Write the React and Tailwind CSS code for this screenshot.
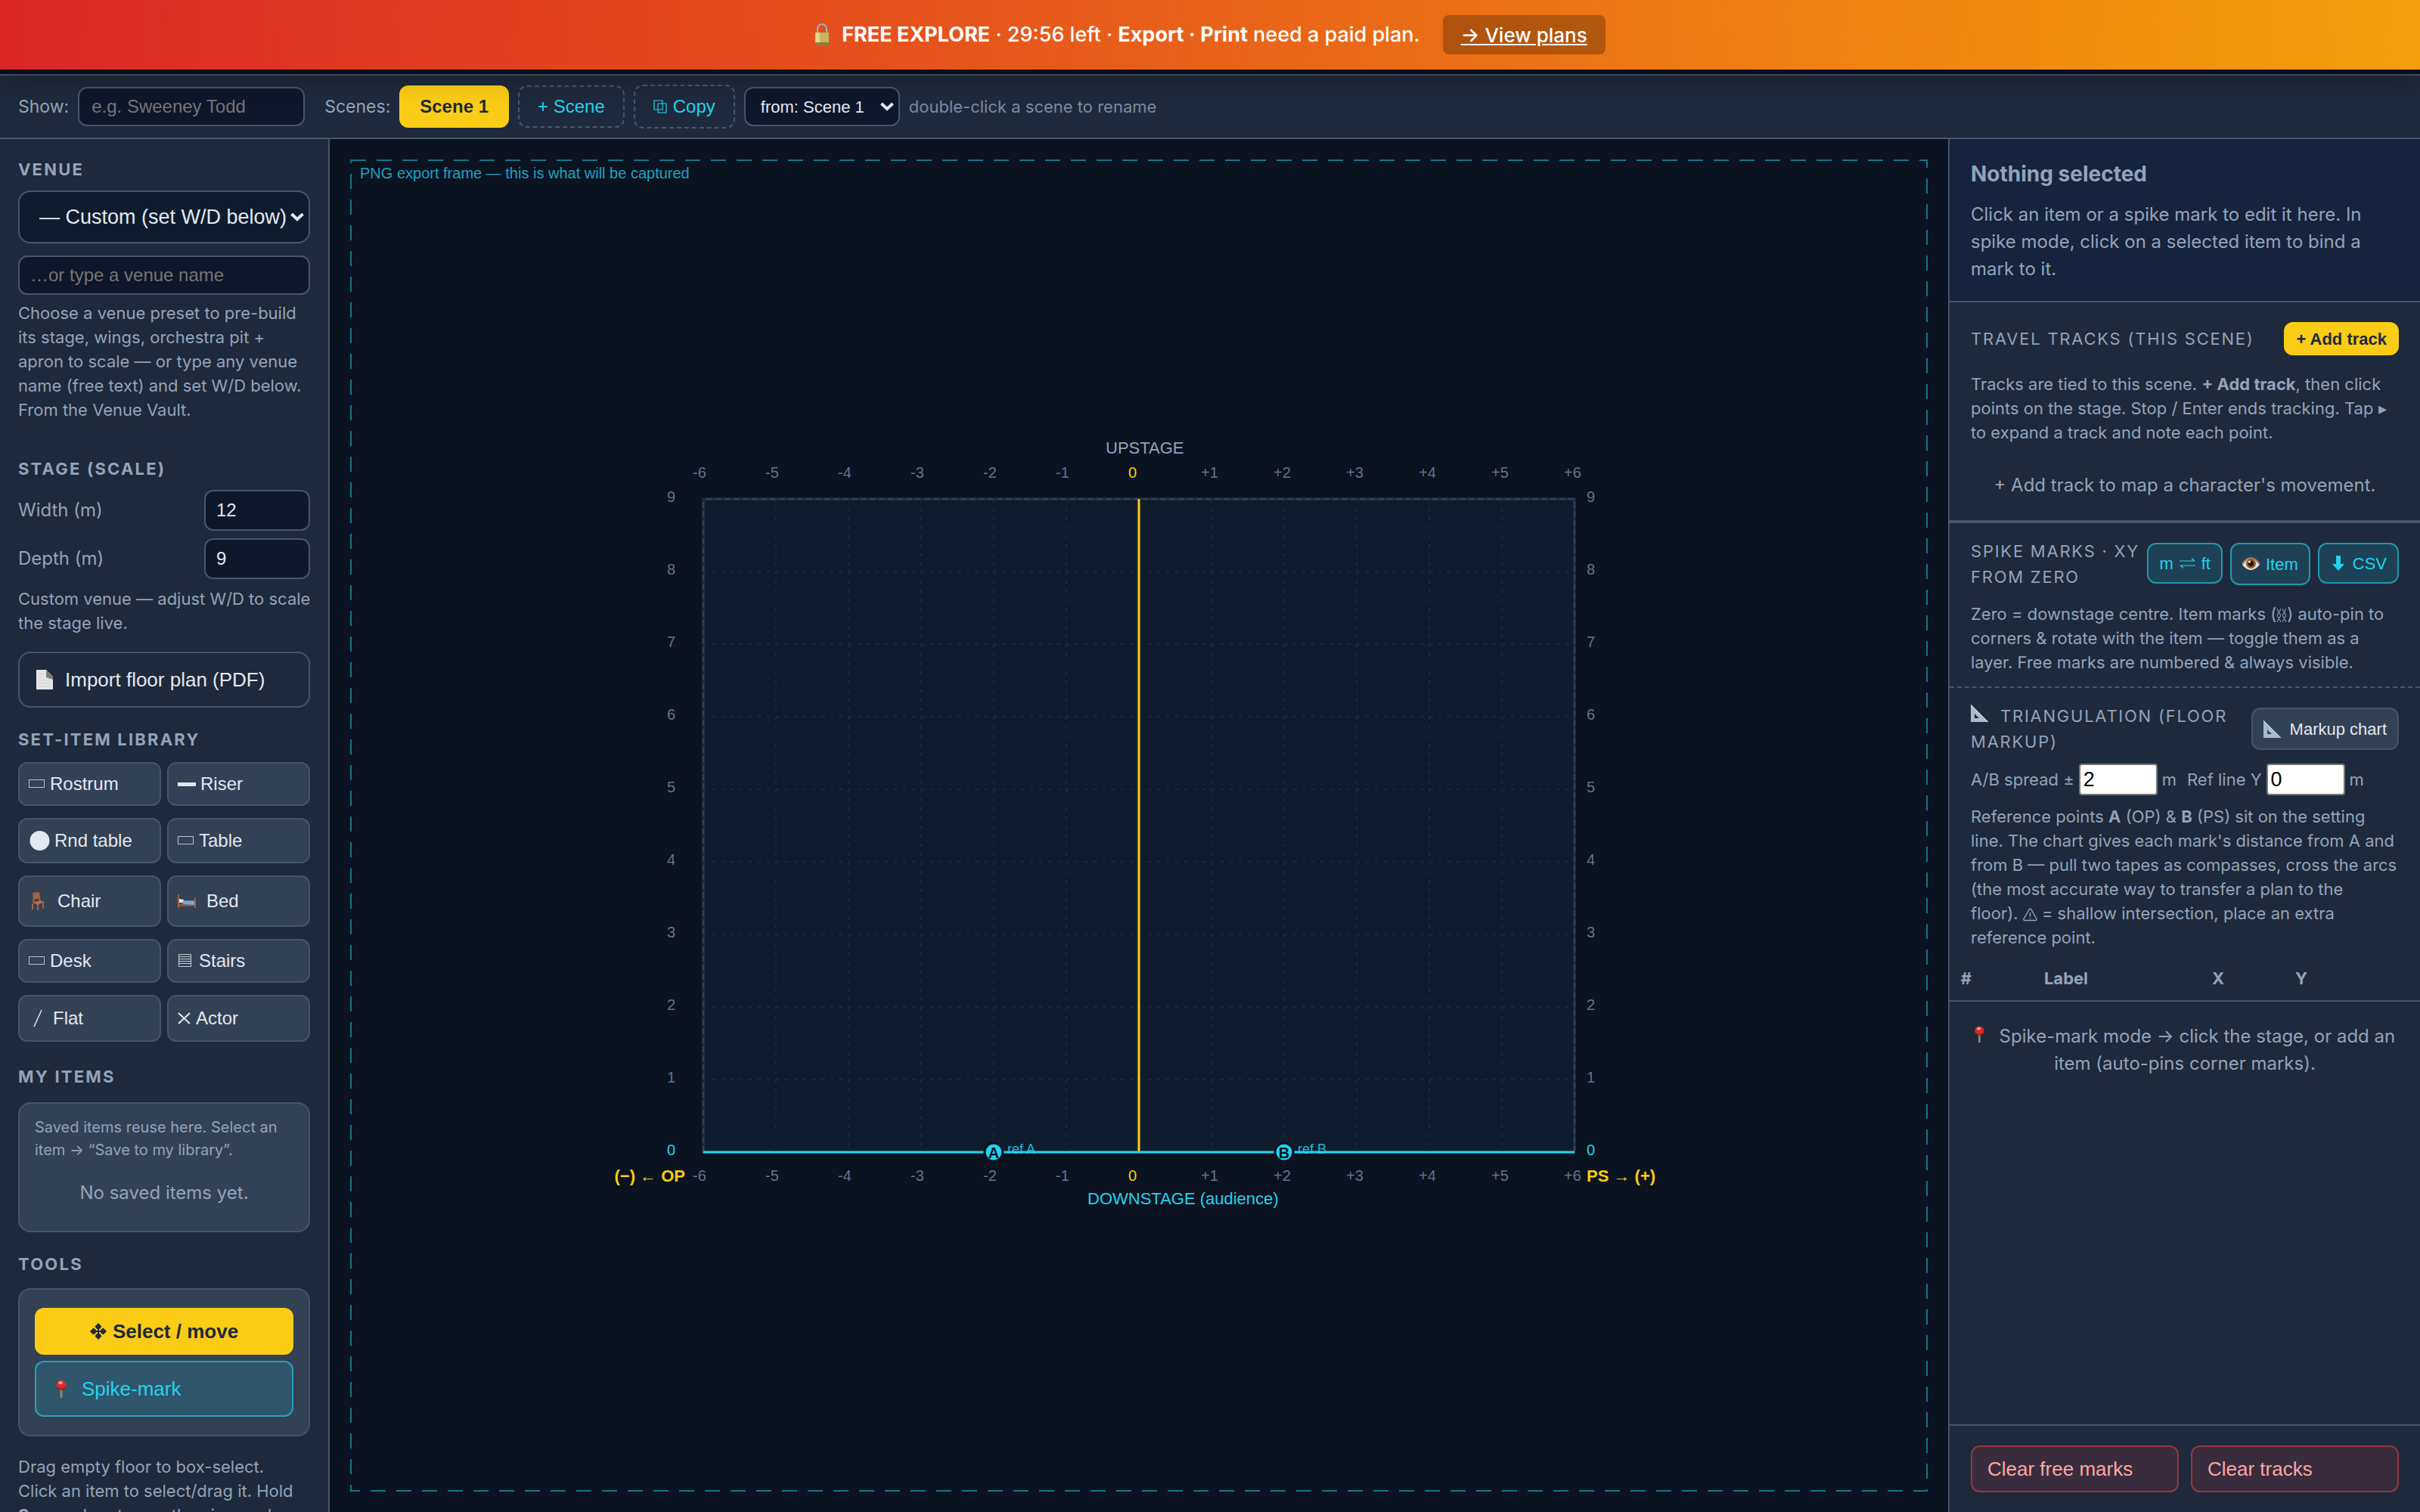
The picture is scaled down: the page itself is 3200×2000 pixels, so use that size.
import React from 'react';

const LockIcon = () => (
  <svg width="20" height="34" viewBox="0 0 20 34" aria-hidden="true">
    <path d="M4 17V9a6 6 0 0 1 12 0v8" fill="none" stroke="#9fb0bb" strokeWidth="2" />
    <rect x="1" y="14" width="18" height="17" rx="1" fill="#c8b460" />
    <rect x="1" y="14" width="6" height="17" rx="1" fill="#e3d68c" />
    <path d="M1 27h18v4H1z" fill="#8f7b34" />
  </svg>
);

const PageIcon = () => (
  <svg width="22" height="26" viewBox="0 0 22 26" aria-hidden="true">
    <path d="M0 0h13l9 9v17H0z" fill="#e6e6e6" />
    <path d="M13 0l9 9v4l-9-3z" fill="#7d7d7d" />
    <path d="M3 6h7M3 10h7M3 14h16M3 18h16M3 22h16" stroke="#d0d0d0" strokeWidth="1" />
  </svg>
);

const PinIcon = ({ size = 24 }) => (
  <svg width={(size * 14) / 24} height={size} viewBox="0 0 14 24" aria-hidden="true">
    <path d="M7 12v12" stroke="#8d8580" strokeWidth="3" />
    <circle cx="7" cy="7" r="6.500" fill="#d92b2b" />
    <path d="M2 10a6 6 0 0 0 10 0" fill="none" stroke="#a31919" strokeWidth="2" />
    <ellipse cx="6" cy="4" rx="3" ry="2" fill="#ff8f85" />
  </svg>
);

const RulerIcon = () => (
  <svg width="23" height="23" viewBox="0 0 23 23" aria-hidden="true">
    <path d="M0 0l23 23H0zM5 12v6h6z" fill="#a9bccb" fillRule="evenodd" />
    <path d="M0 0l23 23" stroke="#dce7ef" strokeWidth="1" />
  </svg>
);

const EyeIcon = () => (
  <svg width="23" height="18" viewBox="0 0 23 18" aria-hidden="true">
    <path d="M0 10Q11 -6 23 10Q11 24 0 10z" fill="#eadfd8" />
    <path d="M0 9Q11 -7 23 9" fill="none" stroke="#a5786a" strokeWidth="2" />
    <circle cx="11.500" cy="8.500" r="6.500" fill="#8a5a22" />
    <circle cx="11.500" cy="8.500" r="3.500" fill="#1b120b" />
    <circle cx="9.500" cy="6" r="1.500" fill="#fff" />
  </svg>
);

const CopyIcon = () => (
  <svg width="18" height="18" viewBox="0 0 18 18" fill="none" stroke="currentColor" strokeWidth="1.200" aria-hidden="true">
    <path d="M1 1h11v12H1zM6 5h11v12H6z" />
  </svg>
);

const SwapIcon = () => (
  <svg width="21" height="14" viewBox="0 0 21 14" fill="none" stroke="currentColor" strokeWidth="1.200" aria-hidden="true">
    <path d="M0 4h20M16 0.500l4 3.500M21 10H1M5 13.500l-4-3.500" />
  </svg>
);

const DownIcon = () => (
  <svg width="22" height="20" viewBox="-3 0 22 20" fill="currentColor" aria-hidden="true">
    <path d="M5 0h6v11h5l-8 9-8-9h5z" />
  </svg>
);

const MoveIcon = () => (
  <svg width="22" height="22" viewBox="0 0 20 20" fill="currentColor" aria-hidden="true">
    <path d="M10 0l4 4-2 3h-1v2h2V8l3-2 4 4-4 4-3-2v-1h-2v2h1l2 3-4 4-4-4 2-3h1v-2H7v1l-3 2-4-4 4-4 3 2v1h2V7H8L6 4z" />
  </svg>
);

const ChainIcon = () => (
  <svg className="inline-block" width="14" height="18" viewBox="0 0 14 18" fill="none" stroke="currentColor" aria-hidden="true">
    <path d="M1.500 0q0 4 2 4t2-4M8.500 0q0 4 2 4t2-4M1.500 18q0-4 2-4t2 4M8.500 18q0-4 2-4t2 4M3.500 3v4M10.500 3v4M3.500 11v4M10.500 11v4" />
    <ellipse cx="3.500" cy="9" rx="2" ry="3" />
    <ellipse cx="10.500" cy="9" rx="2" ry="3" />
  </svg>
);

const WarnIcon = () => (
  <svg className="inline-block" width="19" height="18" viewBox="0 0 19 18" fill="none" stroke="currentColor" strokeWidth="1.400" aria-hidden="true">
    <path d="M8.500 1.500q1-1.200 2 0l7.500 13q.5 2-1.500 2h-14q-2 0-1.500-2zM9.500 6v5.500M9.500 13v1.500" />
  </svg>
);

const Chevron = () => (
  <svg
    className="pointer-events-none absolute top-1/2 right-2 -translate-y-1/2"
    width="18"
    height="12"
    viewBox="0 0 18 12"
    fill="none"
    stroke="#e2e8f0"
    strokeWidth="4"
    aria-hidden="true"
  >
    <path d="M1.500 2L9 9l7.500-7" />
  </svg>
);

// icons of the set-item library
const glyphs = {
  box: (
    <svg width="22" height="12" viewBox="0 0 22 12" fill="none" stroke="#b4bfcc">
      <rect x="0.500" y="0.500" width="20" height="10" />
    </svg>
  ),
  bar: (
    <svg width="24" height="5" viewBox="0 0 24 5">
      <rect width="24" height="5" fill="#e2e8f0" />
    </svg>
  ),
  round: (
    <svg width="28" height="26" viewBox="0 0 28 26">
      <circle cx="14.500" cy="13" r="13" fill="#e2e8f0" />
    </svg>
  ),
  chair: (
    <svg width="22" height="24" viewBox="0 0 22 24" fill="none" stroke="#a9603d" strokeWidth="2">
      <path d="M5 1l9-1 1 8-9 2z" fill="#a9603d" stroke="none" />
      <path d="M6 9l1 5M14 8l1 4M5 15v8M12 16v8M19 13v9" />
      <path d="M5 14l10-3 6 2-9 4z" fill="#b56c45" stroke="none" />
    </svg>
  ),
  bed: (
    <svg width="24" height="19" viewBox="0 0 24 19">
      <path d="M7 9l14-1v7H7z" fill="#6f9cc4" />
      <path d="M2 6l6 1v4H2z" fill="#dbe6f1" />
      <path d="M2 12h20v4H2z" fill="#8a5135" />
      <path d="M7 8l15 1v5L7 13z" fill="#7ba7cf" />
      <path d="M0 0h2v18H0zM22 5h2v13h-2z" fill="#a9603d" />
    </svg>
  ),
  stairs: (
    <svg width="19" height="18" viewBox="0 0 19 18" fill="none" stroke="#c3ccd7">
      <path d="M1.500 0.500h16v16h-16zM1 3.500h17M1 6.500h17M1 9.500h17M1 12.500h17" />
    </svg>
  ),
  flat: (
    <svg width="20" height="24" viewBox="0 0 20 24" fill="none" stroke="#e2e8f0" strokeWidth="1.500">
      <path d="M7 23L17 1" />
    </svg>
  ),
  cross: (
    <svg width="17" height="16" viewBox="0 0 17 16" fill="none" stroke="#e2e8f0" strokeWidth="2">
      <path d="M1 1l15 14M16 1L1 15" />
    </svg>
  ),
};

const setItems = [
  { label: 'Rostrum', icon: 'box', size: 'h-[58px]', slot: 'w-7' },
  { label: 'Riser', icon: 'bar', size: 'h-[58px]', slot: 'w-[30px]' },
  { label: 'Rnd table', icon: 'round', size: 'h-15', slot: 'w-[34px]' },
  { label: 'Table', icon: 'box', size: 'h-15', slot: 'w-7' },
  { label: 'Chair', icon: 'chair', size: 'h-17', slot: 'w-[38px]' },
  { label: 'Bed', icon: 'bed', size: 'h-17', slot: 'w-[38px]' },
  { label: 'Desk', icon: 'box', size: 'h-[58px]', slot: 'w-7' },
  { label: 'Stairs', icon: 'stairs', size: 'h-[58px]', slot: 'w-7' },
  { label: 'Flat', icon: 'flat', size: 'h-[62px]', slot: 'w-8' },
  { label: 'Actor', icon: 'cross', size: 'h-[62px]', slot: 'w-6' },
];

const Heading = ({ children, className = '' }) => (
  <h2 className={`text-[22px] leading-8 font-bold tracking-widest text-[#94a3b8] uppercase ${className}`}>{children}</h2>
);

const Hint = ({ children, className = '' }) => <p className={`text-[22px] leading-8 text-[#94a3b8] ${className}`}>{children}</p>;

const TrialBanner = () => (
  <div className="relative z-10 flex h-23 shrink-0 items-center justify-center bg-linear-to-r/srgb from-[#dc2626] to-[#f59e0b] text-[27px] font-medium text-white shadow-[0_4px_40px_rgba(0,0,0,0.35)]">
    <LockIcon />
    <span className="ml-4">
      <b>FREE EXPLORE</b> · 29:56 left · <b>Export · Print</b> need a paid plan.
    </span>
    <a href="#plans" className="ml-7.5 flex h-13 items-center rounded-lg bg-black/25 px-6 text-[26px] font-medium underline">
      → View plans
    </a>
  </div>
);

const SceneBar = () => (
  <header className="mt-1.5 flex shrink-0 items-center gap-3 border-y-2 border-[#475569] bg-[#1e293b] px-6 py-3 text-[24px] text-[#94a3b8]">
    <label htmlFor="show" className="text-[23px]">
      Show:
    </label>
    <input
      id="show"
      placeholder="e.g. Sweeney Todd"
      className="h-[52px] w-75 rounded-xl border-2 border-[#475569] bg-[#0f172a] px-4 font-[Liberation_Sans,sans-serif] text-[#e2e8f0] placeholder:text-[#757575]"
    />
    <span className="ml-3.5 text-[23px]">Scenes:</span>
    <button className="h-14 rounded-xl bg-[#facc15] px-[27px] font-[Liberation_Sans,sans-serif] font-bold text-[#1e293b]">Scene 1</button>
    <button className="h-14 rounded-xl border-2 border-dashed border-[#475569] px-6 font-[Liberation_Sans,sans-serif] text-[#22d3ee]">+ Scene</button>
    <button className="flex h-[58px] items-center gap-2 rounded-xl border-2 border-dashed border-[#475569] px-6 font-[Liberation_Sans,sans-serif] text-[#22d3ee]">
      <CopyIcon />
      Copy
    </button>
    <div className="relative">
      <select
        aria-label="Copy from scene"
        className="h-[52px] w-[206px] appearance-none rounded-xl border-2 border-[#475569] bg-[#0f172a] pl-5 font-[Liberation_Sans,sans-serif] text-[22px] text-[#e2e8f0]"
      >
        <option>from: Scene 1</option>
      </select>
      <Chevron />
    </div>
    <span className="text-[22px] opacity-80">double-click a scene to rename</span>
  </header>
);

const StageField = ({ id, label, value }) => (
  <div className="flex items-center justify-between">
    <label htmlFor={id} className="text-[24px] text-[#94a3b8]">
      {label}
    </label>
    <input
      id={id}
      defaultValue={value}
      className="h-[54px] w-35 rounded-xl border-2 border-[#475569] bg-[#0f172a] px-3.5 font-[Liberation_Sans,sans-serif] text-[24px] text-[#e2e8f0]"
    />
  </div>
);

const LeftPanel = () => (
  <aside className="w-109 shrink-0 overflow-hidden border-r-2 border-[#475569] bg-[#1e293b] px-6 pt-6">
    <Heading>Venue</Heading>
    <div className="relative mt-3">
      <select
        aria-label="Venue preset"
        className="h-[70px] w-full appearance-none rounded-2xl border-2 border-[#475569] bg-[#0f1c2e] pl-[26px] font-[Liberation_Sans,sans-serif] text-[27px] text-[#e2e8f0]"
      >
        <option>— Custom (set W/D below)</option>
      </select>
      <Chevron />
    </div>
    <input
      aria-label="Venue name"
      placeholder="…or type a venue name"
      className="mt-4 h-[52px] w-full rounded-xl border-2 border-[#475569] bg-[#0f172a] px-3.5 font-[Liberation_Sans,sans-serif] text-[24px] text-[#e2e8f0] placeholder:text-[#757575]"
    />
    <Hint className="mt-2">
      Choose a venue preset to pre-build its stage, wings, orchestra pit + apron to scale — or type any venue name (free text) and set W/D below. From the
      Venue Vault.
    </Hint>

    <Heading className="mt-11.5">Stage (scale)</Heading>
    <div className="mt-3 flex flex-col gap-2.5">
      <StageField id="width" label="Width (m)" value="12" />
      <StageField id="depth" label="Depth (m)" value="9" />
    </div>
    <Hint className="mt-2.5 whitespace-nowrap">
      Custom venue — adjust W/D to scale
      <br />
      the stage live.
    </Hint>
    <button className="mt-5.5 flex h-[74px] w-full items-center gap-4 rounded-2xl border-2 border-[#475569] px-[22px] font-[Liberation_Sans,sans-serif] text-[26px] text-[#e2e8f0]">
      <PageIcon />
      Import floor plan (PDF)
    </button>

    <Heading className="mt-6.5">Set-item library</Heading>
    <div className="mt-3.5 grid grid-cols-2 gap-x-2 gap-y-4">
      {setItems.map((item) => (
        <button
          key={item.label}
          className={`flex items-center rounded-xl border-2 border-[#475569] bg-[#334155] px-3 font-[Liberation_Sans,sans-serif] text-[24px] text-[#e2e8f0] ${item.size}`}
        >
          <span className={`shrink-0 text-left ${item.slot}`}>{glyphs[item.icon]}</span>
          {item.label}
        </button>
      ))}
    </div>

    <Heading className="mt-7.5">My items</Heading>
    <div className="mt-4.5 h-43 rounded-2xl border-2 border-[#475569] bg-[#334155] px-5 pt-4 text-[#94a3b8]">
      <p className="text-[20px] leading-[30px]">Saved items reuse here. Select an item → “Save to my library”.</p>
      <p className="mt-6 text-center text-[24px] leading-9">No saved items yet.</p>
    </div>

    <Heading className="mt-6.5">Tools</Heading>
    <div className="mt-4 flex flex-col gap-2 rounded-2xl border-2 border-[#475569] bg-[#334155] px-5 py-6 font-[Liberation_Sans,sans-serif] text-[26px]">
      <button className="flex h-[62px] items-center justify-center gap-2 rounded-xl bg-[#facc15] font-bold text-[#1e293b]">
        <MoveIcon />
        Select / move
      </button>
      <button className="flex h-[74px] items-center gap-5 rounded-xl border-2 border-[#22d3ee]/60 bg-[#22d3ee]/15 px-[26px] text-[#22d3ee]">
        <PinIcon />
        Spike-mark
      </button>
    </div>
    <Hint className="mt-6">
      Drag empty floor to box-select.
      <br />
      Click an item to select/drag it. Hold <b>Space</b>-drag to pan the view and wheel to zoom.
    </Hint>
  </aside>
);

// stage geometry in drawing units, 96 per metre
const UNIT = 96;
const LEFT = 494;
const RIGHT = 1646;
const TOP = 476;
const BOTTOM = 1340;
const CENTRE = 1070;
const columns = Array.from({ length: 13 }, (_, i) => i - 6);
const rows = Array.from({ length: 10 }, (_, i) => i);

const RefPoint = ({ x, name }) => (
  <g>
    <circle cx={x} cy={BOTTOM} r="12" fill="#22d3ee" stroke="#0b1220" strokeWidth="3" />
    <text x={x} y={BOTTOM + 8} textAnchor="middle" fontSize="20" fontWeight="700" fill="#0b1220">
      {name}
    </text>
    <text x={x + 18} y={BOTTOM + 2} fontSize="18" fill="#22d3ee" opacity="0.85">
      ref {name}
    </text>
  </g>
);

const StagePlan = () => (
  <main className="min-w-0 flex-1 bg-[#0b1220]">
    <svg className="block h-full w-full" viewBox="0 0 2140 1816" fontFamily="Liberation Sans, sans-serif" fontSize="20">
      <rect x="28" y="28" width="2084" height="1760" fill="none" stroke="#22d3ee" strokeOpacity="0.5" strokeWidth="2" strokeDasharray="20 14" />
      <text x="40" y="52" fill="#22d3ee" opacity="0.75">
        PNG export frame — this is what will be captured
      </text>

      <rect x={LEFT} y={TOP} width={RIGHT - LEFT} height={BOTTOM - TOP} fill="#0f1c2e" stroke="#334155" strokeWidth="3" />
      <g stroke="#1e293b" strokeWidth="2" strokeDasharray="4 8">
        {columns.map((m) => (
          <line key={m} x1={CENTRE + m * UNIT} y1={TOP} x2={CENTRE + m * UNIT} y2={BOTTOM} />
        ))}
        {rows.map((m) => (
          <line key={m} x1={LEFT} y1={BOTTOM - m * UNIT} x2={RIGHT} y2={BOTTOM - m * UNIT} />
        ))}
      </g>
      <line x1={CENTRE} y1={TOP} x2={CENTRE} y2={BOTTOM} stroke="#facc15" strokeWidth="3" />
      <line x1={LEFT} y1={BOTTOM} x2={RIGHT} y2={BOTTOM} stroke="#22d3ee" strokeWidth="3" />

      {columns.map((m) => (
        <g key={m} fill={m === 0 ? '#facc15' : '#64748b'}>
          <text x={CENTRE + m * UNIT - 14} y={TOP - 28}>
            {m > 0 ? `+${m}` : m}
          </text>
          <text x={CENTRE + m * UNIT - 14} y={BOTTOM + 38}>
            {m > 0 ? `+${m}` : m}
          </text>
        </g>
      ))}
      {rows.map((m) => (
        <g key={m} fill={m === 0 ? '#22d3ee' : '#64748b'}>
          <text x={LEFT - 48} y={BOTTOM - m * UNIT + 4}>
            {m}
          </text>
          <text x={RIGHT + 16} y={BOTTOM - m * UNIT + 4}>
            {m}
          </text>
        </g>
      ))}

      <g fontSize="22">
        <text x={CENTRE - 44} y={TOP - 60} fill="#94a3b8">
          UPSTAGE
        </text>
        <text x={CENTRE - 68} y={BOTTOM + 69} fill="#22d3ee">
          DOWNSTAGE (audience)
        </text>
        <text x={LEFT - 24} y={BOTTOM + 39} textAnchor="end" fontWeight="700" fill="#facc15">
          (−) ← OP
        </text>
        <text x={RIGHT + 16} y={BOTTOM + 39} fontWeight="700" fill="#facc15">
          PS → (+)
        </text>
      </g>
      <RefPoint x={CENTRE - 2 * UNIT} name="A" />
      <RefPoint x={CENTRE + 2 * UNIT} name="B" />
    </svg>
  </main>
);

const PanelTitle = ({ children }) => (
  <h2 className="text-[22px] leading-[34px] font-normal tracking-[0.08em] text-[#94a3b8] uppercase">{children}</h2>
);

const cyanButton =
  'flex shrink-0 items-center gap-2 rounded-xl border-2 border-[#22d3ee]/60 bg-[#22d3ee]/15 px-3.5 font-[Liberation_Sans,sans-serif] text-[22px] text-[#22d3ee]';
const dangerButton =
  'h-[62px] flex-1 rounded-xl border-2 border-[#ef4444]/50 bg-[#ef4444]/13 px-5 text-left font-[Liberation_Sans,sans-serif] text-[26px] text-[#fca5a5]';
const smallInput =
  'h-[42px] w-26 rounded-sm border-2 border-[#767676] bg-white px-1 font-[Liberation_Sans,sans-serif] text-[27px] text-black';

const RightPanel = () => (
  <aside className="flex w-156 shrink-0 flex-col border-l-2 border-[#475569] bg-[#1e293b] text-[#94a3b8]">
    <section className="border-b-2 border-[#475569] bg-[#17233c] px-7 pt-6 pb-6">
      <h2 className="text-[28px] leading-11 font-bold">Nothing selected</h2>
      <p className="mt-3.5 text-[24px] leading-9">
        Click an item or a spike mark to edit it here. In spike mode, click on a selected item to bind a mark to it.
      </p>
    </section>

    <section className="border-b-4 border-[#475569] px-7 pt-6.5 pb-7">
      <div className="flex items-center justify-between">
        <PanelTitle>Travel tracks (this scene)</PanelTitle>
        <button className="h-11 rounded-xl bg-[#facc15] px-4 font-[Liberation_Sans,sans-serif] text-[22px] font-bold text-[#1e293b]">+ Add track</button>
      </div>
      <Hint className="mt-5.5">
        Tracks are tied to this scene. <b>+ Add track</b>, then click points on the stage. Stop / Enter ends tracking. Tap ▸ to expand a track and note each
        point.
      </Hint>
      <p className="mt-9 text-center text-[24px] leading-9">+ Add track to map a character's movement.</p>
    </section>

    <section className="border-b-2 border-dashed border-[#475569] px-7 pt-5 pb-4">
      <div className="flex items-start justify-between">
        <PanelTitle>
          Spike marks · XY
          <br />
          from zero
        </PanelTitle>
        <div className="mt-1.5 flex items-start gap-2.5">
          <button className={`h-[54px] ${cyanButton}`}>
            m <SwapIcon /> ft
          </button>
          <button className={`h-14 ${cyanButton}`}>
            <EyeIcon /> Item
          </button>
          <button className={`h-[54px] ${cyanButton}`}>
            <DownIcon /> CSV
          </button>
        </div>
      </div>
      <Hint className="mt-4">
        Zero = downstage centre. Item marks (<ChainIcon />) auto-pin to corners &amp; rotate with the item — toggle them as a layer. Free marks are numbered
        &amp; always visible.
      </Hint>
    </section>

    <section className="px-7 pt-5">
      <div className="flex items-center justify-between">
        <PanelTitle>
          <span className="mr-4 inline-block">
            <RulerIcon />
          </span>
          Triangulation (floor
          <br />
          markup)
        </PanelTitle>
        <button className="flex h-14 shrink-0 items-center gap-3 rounded-xl border-2 border-[#475569] bg-[#334155] px-3.5 font-[Liberation_Sans,sans-serif] text-[22px] text-[#e2e8f0]">
          <RulerIcon />
          Markup chart
        </button>
      </div>
      <div className="mt-3 flex items-center gap-1.5 text-[22px]">
        <label htmlFor="spread">A/B spread ±</label>
        <input id="spread" defaultValue="2" className={smallInput} />
        <span className="mr-2">m</span>
        <label htmlFor="refline">Ref line Y</label>
        <input id="refline" defaultValue="0" className={smallInput} />
        <span>m</span>
      </div>
      <Hint className="mt-3">
        Reference points <b>A</b> (OP) &amp; <b>B</b> (PS) sit on the setting line. The chart gives each mark's distance from A and from B — pull two tapes as
        compasses, cross the arcs (the most accurate way to transfer a plan to the
        <br />
        floor). <WarnIcon /> = shallow intersection, place an extra
        <br />
        reference point.
      </Hint>
    </section>

    <table className="mt-2.5 w-full table-fixed text-[22px]">
      <thead>
        <tr className="h-[58px] border-b-2 border-[#475569]">
          <th className="w-11 font-bold">#</th>
          <th className="w-55 font-bold">Label</th>
          <th className="w-9" />
          <th className="w-[110px] font-bold">X</th>
          <th className="w-[110px] font-bold">Y</th>
          <th />
        </tr>
      </thead>
    </table>
    <p className="px-7 pt-7 text-center text-[24px] leading-9">
      <span className="mr-5 inline-block">
        <PinIcon size={22} />
      </span>
      Spike-mark mode → click the stage, or add an item (auto-pins corner marks).
    </p>

    <footer className="mt-auto flex gap-4 border-t-2 border-[#475569] px-7 py-6.5">
      <button className={dangerButton}>Clear free marks</button>
      <button className={dangerButton}>Clear tracks</button>
    </footer>
  </aside>
);

export default function App() {
  return (
    <div className="flex h-screen flex-col overflow-hidden bg-[#0b1220] font-[Inter,sans-serif]">
      <TrialBanner />
      <SceneBar />
      <div className="flex min-h-0 flex-1">
        <LeftPanel />
        <StagePlan />
        <RightPanel />
      </div>
    </div>
  );
}
